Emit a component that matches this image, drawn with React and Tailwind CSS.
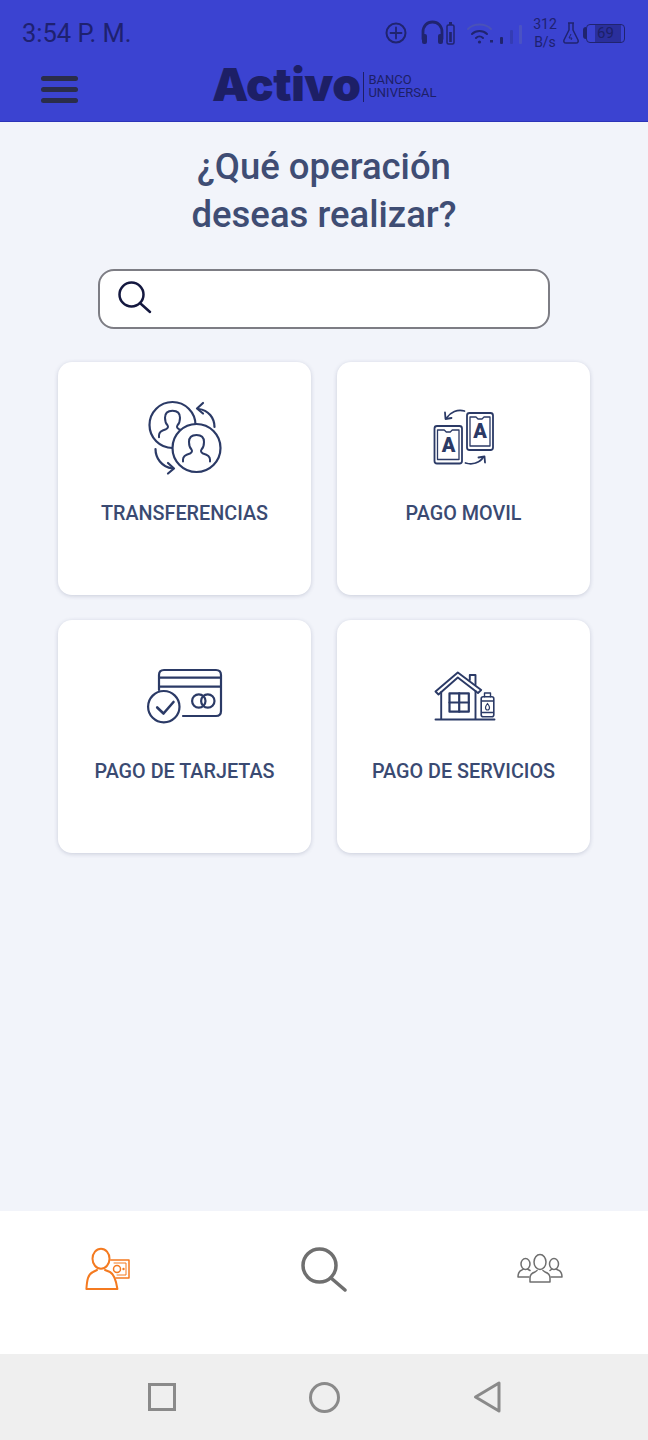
import { Fragment } from "react";

const NAVY = "#2b3a66";

function Person({ cx, cy, stroke = NAVY, w = 2 }) {
  // head + shoulders, open at the bottom
  return (
    <path
      d={`M${cx - 13.500} ${cy + 20} v-2 c0 -3 3 -5 7 -6 c2 -1 2.500 -2.500 1.500 -4 c-2 -2 -2.500 -5 -2.500 -7.500 c0 -4.500 2.500 -7 7.500 -7 s7.500 2.500 7.500 7 c0 2.500 -.5 5.500 -2.500 7.500 c-1 1.500 -.5 3 1.500 4 c4 1 7 3 7 6 v2`}
      fill="none"
      stroke={stroke}
      strokeWidth={w}
      strokeLinecap="round"
      strokeLinejoin="round"
    />
  );
}

function TransferIcon() {
  return (
    <svg width="100" height="76" viewBox="0 0 100 76" fill="none" stroke={NAVY} strokeWidth="2.200" strokeLinecap="round" strokeLinejoin="round">
      <circle cx="37.500" cy="25" r="23" />
      <Person cx={37.500} cy={17.200} />
      <circle cx="61.500" cy="48" r="24" fill="#fff" />
      <Person cx={61.500} cy={41.500} />
      <path d="M79.500 27 c0 -9 -6 -17 -16 -18" />
      <path d="M68 3 l-6 5.500 l6 5" />
      <path d="M20.500 49 c0 9 6 18 17 19.500" />
      <path d="M33 63 l6 5.500 l-6 5" />
    </svg>
  );
}

function Phone({ x, y, w, h, tx, ty }) {
  return (
    <Fragment>
      <rect x={x} y={y} width={w} height={h} rx="2.500" />
      <path d={`M${x + 3} ${y + 4} h${w / 2 - 7} l2 2 h4 l2 -2 h${w / 2 - 7} v${h - 8} h-${w - 6} z`} strokeWidth="1.300" />
      <text x={tx} y={ty} fontFamily="Roboto, sans-serif" fontWeight="900" fontSize="20" textAnchor="middle" fill={NAVY} stroke="none">A</text>
    </Fragment>
  );
}

function PhonesIcon() {
  return (
    <svg width="100" height="76" viewBox="0 0 100 76" fill="none" stroke={NAVY} strokeWidth="1.800" strokeLinecap="round" strokeLinejoin="round">
      <Phone x={53} y={13} w={26} h={37} tx={66} ty={38} />
      <Phone x={20.500} y={26} w={27.500} h={37.500} tx={34.500} ty={52} />
      <path d="M50.500 11 c-7 -2 -14 1 -18 7" />
      <path d="M31 12.500 l.5 6.500 l6 -1" />
      <path d="M51.500 63 c7 2 14 0 18 -6" />
      <path d="M64.500 57.500 l6 -1 l.5 6" />
    </svg>
  );
}

function CardIcon() {
  return (
    <svg width="100" height="76" viewBox="0 0 100 76" fill="none" stroke={NAVY} strokeWidth="2.200" strokeLinecap="round" strokeLinejoin="round">
      <path d="M24 32 v-15 c0 -3 2 -5 5 -5 h52 c3 0 5 2 5 5 v36 c0 3 -2 5 -5 5 h-33" />
      <path d="M24 19.700 h62 M24 28.700 h62" />
      <circle cx="28.800" cy="48.700" r="15.700" />
      <path d="M22.200 49.500 l6.300 6 l10 -11.500" strokeWidth="2.600" />
      <circle cx="63.800" cy="43" r="6.700" />
      <circle cx="72.800" cy="43" r="6.700" />
    </svg>
  );
}

function HouseIcon() {
  return (
    <svg width="100" height="76" viewBox="0 0 100 76" fill="none" stroke={NAVY} strokeWidth="1.900" strokeLinecap="round" strokeLinejoin="round">
      <path d="M21.500 33.500 L43.800 14.500 L67.200 32 L64 35 L43.800 19.500 L24.500 36.500 Z" />
      <path d="M27.200 34 v27.300 M61.500 33 v28.300 M21.500 61.500 h59" />
      <rect x="35.500" y="35.300" width="19.300" height="18.400" strokeWidth="2.200" />
      <path d="M45.200 35.300 v18.400 M35.500 44.500 h19.300" strokeWidth="2.200" />
      <path d="M55.800 22 v-5 h5.700 v9.500" />
      <rect x="67.200" y="38.700" width="12.600" height="20" rx="2" strokeWidth="1.600" />
      <path d="M70.500 38.700 v-3.700 h6 v3.700 M68 43 h11 M68 54.500 h11" strokeWidth="1.400" />
      <path d="M73.500 45.500 c-1.500 2 -2 3 -2 4 c0 1.500 1 2.500 2 2.500 s2 -1 2 -2.500 c0 -1 -.5 -2 -2 -4 z" strokeWidth="1.200" />
    </svg>
  );
}

function OperationCard({ icon, label }) {
  return (
    <div className="h-[233px] flex flex-col items-center pt-[38px] bg-white rounded-[14px] shadow-[0_1px_4px_rgba(60,70,110,0.22)]">
      {icon}
      <span className="mt-[26px] text-[19.800px] leading-6 font-medium whitespace-nowrap text-[#3a4a72]">{label}</span>
    </div>
  );
}

function StatusIcons() {
  return (
    <svg width="138" height="34" viewBox="0 0 138 34" fill="none" stroke="#20246f" strokeLinecap="round" strokeLinejoin="round">
      {/* add circle */}
      <circle cx="11" cy="17" r="9.500" strokeWidth="2" />
      <path d="M5.500 17 h11 M11 11.500 v11" strokeWidth="1.800" />
      {/* headphones + small battery */}
      <path d="M38 23 v-7 c0 -6 4 -10 9.500 -10 s9.500 4 9.500 10 v7" strokeWidth="2.800" />
      <rect x="37" y="18" width="5" height="10" rx="2" fill="#20246f" stroke="none" />
      <rect x="53" y="18" width="5" height="10" rx="2" fill="#20246f" stroke="none" />
      <rect x="62" y="9" width="7" height="19" rx="1.500" strokeWidth="1.500" />
      <rect x="64.200" y="16" width="2.600" height="10" fill="#20246f" stroke="none" />
      <rect x="64" y="6" width="3" height="3" fill="#20246f" stroke="none" />
      {/* wifi */}
      <path d="M83 13 c6 -6 17 -6 23 0" stroke="#4a52b8" strokeWidth="2" />
      <path d="M87 18 c4 -4 11 -4 15 0" strokeWidth="2" />
      <path d="M91 22 c2 -2 5 -2 7 0" strokeWidth="2" />
      <circle cx="94.500" cy="26" r="1.600" fill="#20246f" stroke="none" />
      {/* signal bars */}
      <rect x="105" y="24" width="3" height="2.500" fill="#20246f" stroke="none" />
      <rect x="115" y="21" width="3" height="7" rx="1" fill="#20246f" stroke="none" />
      <rect x="125" y="14" width="3" height="14" rx="1" fill="#343cb4" stroke="none" />
      <rect x="134" y="9" width="3" height="19" rx="1" fill="#4a52c4" stroke="none" />
    </svg>
  );
}

function BatteryStatus() {
  return (
    <div className="ml-[5px] flex items-center">
      <svg width="16" height="24" viewBox="0 0 16 24" fill="none" stroke="#20246f" strokeWidth="1.500" strokeLinejoin="round">
        <path d="M5 2 h6 M6 2 v7 l-5 10 c-.5 1.500 0 3 2 3 h10 c2 0 2.500 -1.500 2 -3 l-5 -10 v-7" />
        <path d="M8 13 l-2 4 h3 l-1 2" strokeWidth="1" />
      </svg>
      <div className="ml-[4px] w-[3px] h-[12px] bg-[#20246f] rounded-l-sm" />
      <div className="relative w-[39px] h-[19px] border-[1.500px] border-[#20246f] rounded-[4px] overflow-hidden">
        <div className="absolute inset-y-0 left-[8px] w-[26px] bg-[#2a2f9c]" />
        <span className="absolute inset-0 flex items-center justify-center text-[15px] leading-none text-[#1c2068]">69</span>
      </div>
    </div>
  );
}

export default function App() {
  return (
    <div className="w-[648px] h-[1440px] flex flex-col bg-[#f2f4fa] font-['Roboto',sans-serif]">
      {/* Header */}
      <header className="h-[122px] flex-shrink-0 bg-[#3b43d1] border-b border-[#2c33b8]">
        <div className="h-[66px] flex items-center pl-[22px] pr-[23px]">
          <span className="mt-[2px] text-[25.500px] leading-none text-[#1e2170]">3:54 P. M.</span>
          <div className="ml-auto flex items-center">
            <StatusIcons />
            <div className="ml-[9px] w-[26px] flex flex-col items-center text-[14px] leading-[18px] text-[#1e2170]">
              <span>312</span>
              <span>B/s</span>
            </div>
            <BatteryStatus />
          </div>
        </div>
        <div className="flex items-start">
          <div className="ml-[41px] mt-[10px] w-[37px] flex flex-col gap-[6px]">
            <div className="h-[5px] rounded-sm bg-[#2a2d4a]" />
            <div className="h-[5px] rounded-sm bg-[#2a2d4a]" />
            <div className="h-[5px] rounded-sm bg-[#2a2d4a]" />
          </div>
          <div className="ml-[134px] -mt-[1px] flex items-center">
            <span className="font-['Inter',sans-serif] text-[46px] leading-[38px] font-black tracking-[-0.500px] text-[#1d1f66]">Activo</span>
            <div className="ml-[3px] mt-[6px] w-px h-[30px] bg-[#1d1f66]" />
            <div className="ml-[4px] mt-[4px] flex flex-col text-[13px] leading-[13px] text-[#1d1f66]">
              <span>BANCO</span>
              <span>UNIVERSAL</span>
            </div>
          </div>
        </div>
      </header>

      {/* Content */}
      <main className="flex-1 flex flex-col items-center pt-[21px]">
        <h1 className="text-[36.500px] leading-[48px] font-medium text-center text-[#3f4d74]">
          ¿Qué operación
          <br />
          deseas realizar?
        </h1>
        <div className="mt-[30px] w-[452px] h-[60px] flex items-center pl-[17px] bg-white border-2 border-[#7d7d84] rounded-[16px]">
          <svg width="36" height="36" viewBox="0 0 36 36" fill="none" stroke="#14183f" strokeLinecap="round" className="-mt-[2px]">
            <circle cx="14.500" cy="14.500" r="12" strokeWidth="2.500" />
            <path d="M23.500 23.500 L33 32" strokeWidth="2.500" />
          </svg>
        </div>
        <div className="mt-[33px] w-[532px] grid grid-cols-2 gap-x-[26px] gap-y-[25px]">
          <OperationCard icon={<TransferIcon />} label="TRANSFERENCIAS" />
          <OperationCard icon={<PhonesIcon />} label="PAGO MOVIL" />
          <OperationCard icon={<CardIcon />} label="PAGO DE TARJETAS" />
          <OperationCard icon={<HouseIcon />} label="PAGO DE SERVICIOS" />
        </div>
      </main>

      {/* Bottom nav */}
      <nav className="h-[143px] flex-shrink-0 bg-white grid grid-cols-3 justify-items-center pt-[35px]">
        <svg width="50" height="46" viewBox="0 0 50 46" fill="none" stroke="#f47a20" strokeWidth="2" strokeLinecap="round" strokeLinejoin="round">
          <ellipse cx="18" cy="12.700" rx="8.500" ry="10" />
          <path d="M14 24 L10 26 C5 28 4 34 3.400 43 H34.400 C33 34 31 28 27 26 L22 24" />
          <path d="M27.700 14 H46 V32 H33" strokeWidth="1.500" />
          <path d="M31 17 H43 V29 H34" strokeWidth="1" />
          <circle cx="34" cy="23" r="3.500" strokeWidth="1.500" />
          <circle cx="40.500" cy="23" r="1.200" fill="#f47a20" stroke="none" />
        </svg>
        <svg width="50" height="46" viewBox="0 0 50 46" fill="none" stroke="#6f6f6f" strokeLinecap="round">
          <circle cx="20.500" cy="19.500" r="16.500" strokeWidth="3.500" />
          <path d="M32 32 L46 44" strokeWidth="3.500" />
        </svg>
        <svg width="50" height="46" viewBox="0 0 50 46" fill="none" stroke="#6f6f6f" strokeWidth="1.500" strokeLinecap="round" strokeLinejoin="round">
          <ellipse cx="25" cy="16" rx="6" ry="7.500" />
          <path d="M22 24.500 L20 26 C17 27 15 29 15 32 V36 H35 V32 C35 29 33 27 30 26 L28 24.500" />
          <ellipse cx="10.500" cy="18" rx="4.500" ry="5.500" />
          <path d="M8.500 23 L7 24 C4 25 3 27 3 31 H14 M12.500 23 L15 24.500" />
          <ellipse cx="39" cy="18" rx="4.500" ry="5.500" />
          <path d="M41 23 L43 24 C46 25 47 27 47 31 H36 M37 23 L35 24.500" />
        </svg>
      </nav>

      {/* Android nav bar */}
      <div className="h-[86px] flex-shrink-0 bg-[#efefef] flex items-center justify-center gap-[133px]">
        <div className="w-[28px] h-[28px] border-[3px] border-[#8a8a8a]" />
        <div className="w-[31px] h-[31px] border-[3px] border-[#8a8a8a] rounded-full" />
        <svg width="28" height="34" viewBox="0 0 28 34" fill="none" stroke="#8a8a8a" strokeWidth="3" strokeLinejoin="round">
          <path d="M2.500 17 L26 3 V31 Z" />
        </svg>
      </div>
    </div>
  );
}
